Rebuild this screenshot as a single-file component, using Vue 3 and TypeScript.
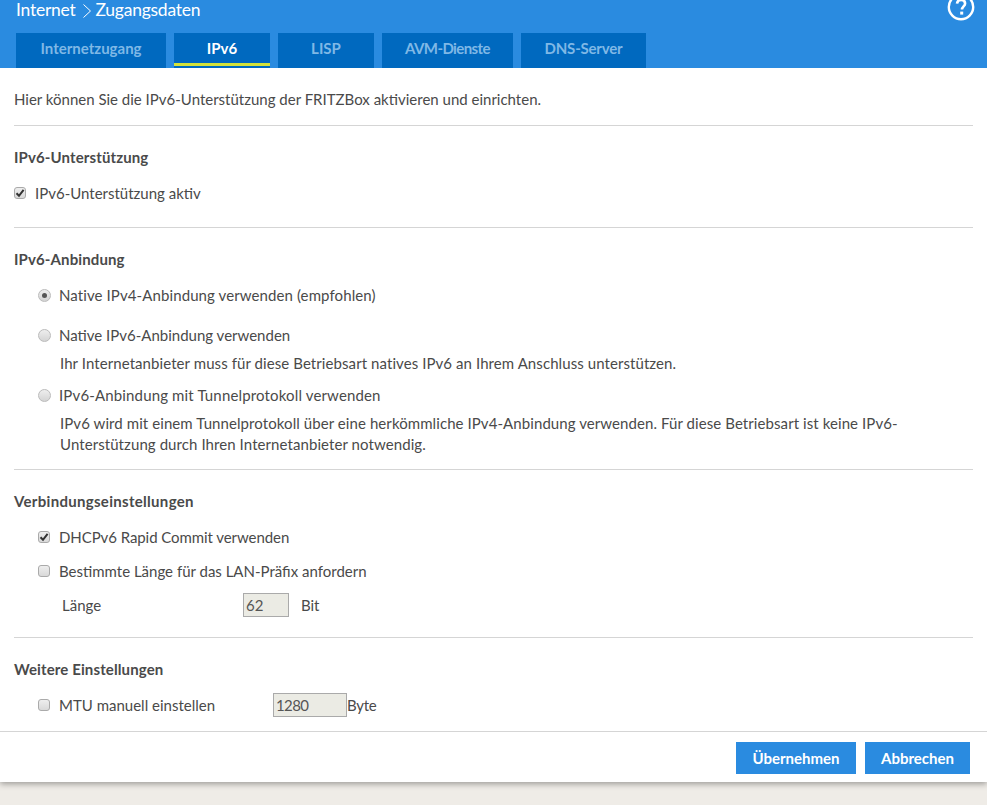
<script setup lang="ts">
const tabs: string[] = ['Internetzugang', 'IPv6', 'LISP', 'AVM-Dienste', 'DNS-Server']
</script>

<template>
  <div class="page">
    <div class="panel">
      <header class="head">
        <div class="titlebar">
          <h1 class="title">Internet<svg class="chev" width="10" height="16" viewBox="0 0 10 16"><path d="M1.5 1.5 8.5 8 1.5 14.5" fill="none" stroke="#fff" stroke-width="1"/></svg>Zugangsdaten</h1>
          <svg class="help" width="28" height="28" viewBox="0 0 28 28">
            <circle cx="14" cy="14" r="12.2" fill="none" stroke="#fff" stroke-width="2.4"/>
            <path d="M10 10.6c.3-2.4 1.9-3.6 4.1-3.6 2.4 0 4 1.4 4 3.4 0 3-3.1 3-3.1 6.2" fill="none" stroke="#fff" stroke-width="2.6"/>
            <rect x="13.2" y="18.6" width="3" height="3" fill="#fff"/>
          </svg>
        </div>
        <nav class="tabs">
          <a v-for="(t, i) in tabs" :key="t" class="tab" :class="['t' + i, { active: t === 'IPv6' }]">{{ t }}</a>
        </nav>
      </header>

      <main class="content">
        <section class="sec intro"><p class="line">Hier können Sie die IPv6-Unterstützung der FRITZBox aktivieren und einrichten.</p></section>

        <section class="sec s1">
          <h2 class="h">IPv6-Unterstützung</h2>
          <label class="row first flush">
            <span class="box"><svg width="10" height="10" viewBox="0 0 10 10"><path d="M1.5 5.2 4 7.8 8.6 1.8" fill="none" stroke="#333" stroke-width="2"/></svg></span>
            <span class="lab">IPv6-Unterstützung aktiv</span>
          </label>
        </section>

        <section class="sec s2">
          <h2 class="h">IPv6-Anbindung</h2>
          <label class="row first"><span class="radio on"><i></i></span><span class="lab wider">Native IPv4-Anbindung verwenden (empfohlen)</span></label>
          <label class="row gap20"><span class="radio"></span><span class="lab">Native IPv6-Anbindung verwenden</span></label>
          <p class="desc d8">Ihr Internetanbieter muss für diese Betriebsart natives IPv6 an Ihrem Anschluss unterstützen.</p>
          <label class="row gap12"><span class="radio"></span><span class="lab widest">IPv6-Anbindung mit Tunnelprotokoll verwenden</span></label>
          <p class="desc d8 tall">IPv6 wird mit einem Tunnelprotokoll über eine herkömmliche IPv4-Anbindung verwenden. Für diese Betriebsart ist keine IPv6-<br>Unterstützung durch Ihren Internetanbieter notwendig.</p>
        </section>

        <section class="sec s3">
          <h2 class="h long">Verbindungseinstellungen</h2>
          <label class="row first"><span class="box"><svg width="10" height="10" viewBox="0 0 10 10"><path d="M1.5 5.2 4 7.8 8.6 1.8" fill="none" stroke="#333" stroke-width="2"/></svg></span><span class="lab slim">DHCPv6 Rapid Commit verwenden</span></label>
          <label class="row gap14"><span class="box"></span><span class="lab">Bestimmte Länge für das LAN-Präfix anfordern</span></label>
          <div class="row gap14 len">
            <span class="lenlab">Länge</span>
            <input class="field short" value="62" disabled />
            <span class="unit">Bit</span>
          </div>
        </section>

        <section class="sec s4">
          <h2 class="h">Weitere Einstellungen</h2>
          <div class="row first">
            <span class="box"></span><span class="lab mtu">MTU manuell einstellen</span>
            <input class="field wide" value="1280" disabled />
            <span class="unit tight">Byte</span>
          </div>
        </section>
      </main>

      <footer class="foot">
        <button class="btn apply">Übernehmen</button>
        <button class="btn cancel">Abbrechen</button>
      </footer>
    </div>
  </div>
</template>

<style>
html, body { margin: 0; background: #efece7; }
</style>

<style scoped>
.page { height: 805px; overflow: hidden; background: #efece7; font-family: Lato, "Open Sans", sans-serif; font-size: 15px; color: #4a4a4a; }
.panel { height: 782px; background: #fff; box-shadow: 0 2px 6px rgba(0,0,0,.35); display: flex; flex-direction: column; }
.head { height: 68px; background: #2a8be0; box-sizing: border-box; }
.titlebar { height: 33px; display: flex; justify-content: space-between; padding: 0 12px 0 16px; }
.title { margin: 0; font-size: 17.5px; font-weight: 400; letter-spacing: -.25px; color: #fff; line-height: 20px; display: flex; align-items: center; height: 19px; }
.chev { margin: 2px 3px 0 7px; }
.help { margin-top: -7px; }
.tabs { display: flex; gap: 8px; padding-left: 16px; }
.tab { height: 35px; line-height: 30px; box-sizing: border-box; background: #0069bf; color: #7fb8e6; font-weight: 700; font-size: 15px; text-align: center; }
.t0 { width: 150px; } .t1, .t2 { width: 96px; }
.t3 { width: 131px; letter-spacing: -.6px; }
.t4 { width: 125px; letter-spacing: -.2px; }
.tab.active { color: #fff; position: relative; }
.tab.active::after { content: ""; position: absolute; left: 0; right: 0; bottom: 2px; height: 3px; background: #d2e23a; }
.content { flex: 1; padding: 0 14px; }
.sec { border-bottom: 1px solid #d5d5d5; }
.sec:last-child { border-bottom: 0; }
.intro { padding: 21px 0 16px; }
.s1 { padding: 21px 0 24px; }
.s2 { padding: 21px 0 14px; }
.s3 { padding: 21px 0 22px; }
.s4 { padding: 21px 0 0; }
.line, .desc { margin: 0; line-height: 20px; }
.line { height: 20px; }
.h { margin: 0; font-size: 15px; line-height: 20px; font-weight: 700; color: #4a4a4a; letter-spacing: .12px; }
.h.long { letter-spacing: .3px; }
.row { display: flex; align-items: center; height: 20px; padding-left: 24px; }
.row.first { margin-top: 16px; }
.row.flush { margin-top: 16px; padding-left: 0; }
.gap20 { margin-top: 20px; }
.gap12 { margin-top: 12px; }
.gap14 { margin-top: 14px; }
.lab { margin-left: 9px; }
.lab.wider { letter-spacing: .1px; }
.lab.widest { letter-spacing: .15px; }
.lab.slim { letter-spacing: -.07px; }
.box { width: 12px; height: 12px; box-sizing: border-box; flex: none; border: 1px solid #aaa; border-radius: 3px; background: linear-gradient(#eee, #d9d9d9); display: flex; align-items: center; justify-content: center; }
.radio { width: 13px; height: 13px; margin-right: -1px; box-sizing: border-box; flex: none; border: 1px solid #bbb; border-radius: 50%; background: linear-gradient(#eee, #d4d4d4); display: flex; align-items: center; justify-content: center; }
.radio i { width: 5px; height: 5px; border-radius: 50%; background: #555; }
.desc { padding-left: 46px; letter-spacing: .08px; }
.d8 { margin-top: 8px; }
.desc.tall { line-height: 21px; margin-top: 7.5px; }
.lenlab { margin-left: 24px; width: 181px; flex: none; }
.len { padding-left: 24px; }
.field { box-sizing: border-box; height: 24px; border: 1px solid #aaa; background: #ebebe4; color: #555; font: inherit; padding: 0 1px 0 2px; margin: 0; flex: none; }
.short { width: 46px; }
.wide { width: 74px; letter-spacing: -.6px; }
.unit { margin-left: 12px; letter-spacing: -.1px; }
.unit.tight { margin-left: 0; letter-spacing: -.3px; }
.mtu { width: 205px; flex: none; margin-right: 9px; }
.foot { height: 51px; box-sizing: border-box; border-top: 1px solid #d5d5d5; display: flex; justify-content: flex-end; gap: 9px; padding: 10px 17px 0 0; }
.btn { height: 32px; border: 0; background: #2a8be0; color: #fff; font: 700 15px Lato, sans-serif; padding: 0; }
.apply { width: 120px; }
.cancel { width: 105px; }
</style>
